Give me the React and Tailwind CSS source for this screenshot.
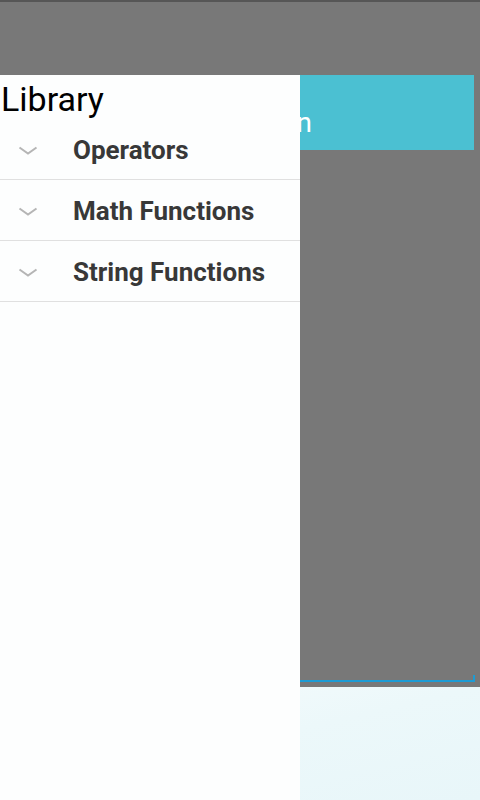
import React from "react";

const sections = ["Operators", "Math Functions", "String Functions"];

function Chevron() {
  return (
    <svg width="20" height="9" viewBox="0 0 20 9" className="shrink-0">
      <path d="M1.5 1.5 L10 7.5 L18.5 1.5" fill="none" stroke="#b5b5b5" strokeWidth="2" />
    </svg>
  );
}

export default function App() {
  return (
    <div
      className="relative h-[800px] w-[480px] overflow-hidden bg-[#787878]"
      style={{ fontFamily: "Roboto, 'Noto Sans', sans-serif" }}
    >
      {/* app content behind the drawer */}
      <div className="flex h-full flex-col">
        <div className="h-[2px] bg-[#565656]" />
        <div className="h-[73px]" />
        <div className="mr-[6px] flex h-[75px] items-center bg-[#4bc0d2]">
          <div className="w-[312px] pt-[20px] text-right text-[28px] leading-none text-white">
            Run
          </div>
        </div>
        <div className="flex flex-1 flex-col justify-end pb-[5px]">
          <div className="mr-[5px] flex items-end">
            <div className="h-[2px] flex-1 bg-[#1d9bd4]" />
            <div className="h-[7px] w-[2px] bg-[#1d9bd4]" />
          </div>
        </div>
        <div className="h-[113px] bg-gradient-to-br from-[#f7fcfd] via-[#ecf8fa] to-[#e8f6f9]" />
      </div>

      {/* navigation drawer */}
      <div className="absolute bottom-0 left-0 top-[75px] w-[300px] bg-[#fdfefe]">
        <div className="h-[44px] pl-[1px] pt-[5px] text-[34px] leading-[38px] text-black">
          Library
        </div>
        {sections.map((s) => (
          <div
            key={s}
            className="flex h-[61px] items-center border-b border-[#e0e0e0] pt-[2px]"
          >
            <div className="flex w-[73px] justify-start pl-[18px]">
              <Chevron />
            </div>
            <span className="text-[26px] font-bold text-[#383838]">{s}</span>
          </div>
        ))}
      </div>
    </div>
  );
}
